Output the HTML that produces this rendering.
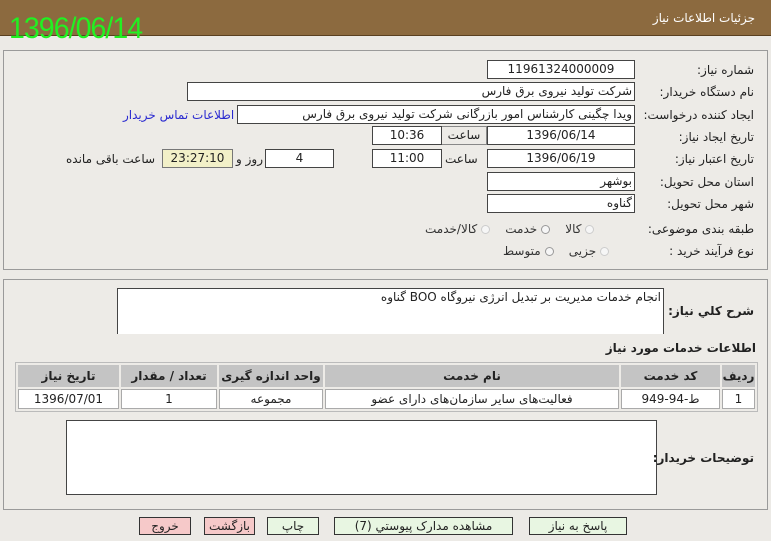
<!DOCTYPE html>
<html><head><meta charset="utf-8"><style>
*{margin:0;padding:0;box-sizing:border-box}
body{width:771px;height:541px;background:#ECEAE6;font-family:Tahoma,"DejaVu Sans","Liberation Sans",sans-serif;font-size:11px;color:#222;position:relative;overflow:hidden;direction:rtl}
.a{position:absolute}
.hdr{left:0;top:0;width:771px;height:36px;background:#8C6A3F;border-bottom:1px solid #5a4020}
.inp{position:absolute;background:#fff;border:1px solid #444;height:19px;line-height:17px;text-align:center;font-size:12px;white-space:nowrap;overflow:hidden}
.lbl{position:absolute;font-size:12px;white-space:nowrap}
.panel{position:absolute;border:1px solid #9a9a9a;background:#EDEBE7}
.rad{display:inline-block;width:9px;height:9px;border-radius:50%;border:1px solid #ccc;background:#f6f6f6;vertical-align:middle}
table{border-collapse:separate;border-spacing:2px;font-size:12px}
td{background:#fff;border:1px solid #aaa;text-align:center;height:20px}
th{background:#C4C4C4;font-weight:bold;height:22px}
.btn{position:absolute;top:517px;height:18px;border:1px solid #333;background:#E8F6E2;font-size:12px;text-align:center;line-height:16px}
</style></head><body>
<div class="a hdr"></div>
<div class="lbl" style="right:16px;top:11px;color:#fff;font-size:12px">جزئیات اطلاعات نیاز</div>
<div class="a" style="left:9px;top:12px;color:#22f022;font-size:30px;font-family:'Liberation Sans Narrow','Liberation Sans',sans-serif;direction:ltr;letter-spacing:-1px;transform:scaleX(0.95);transform-origin:left">1396/06/14</div>

<div class="panel" style="left:3px;top:50px;width:765px;height:220px"></div>
<div class="lbl" style="right:17px;top:63px">شماره نیاز:</div>
<div class="inp" style="left:487px;top:60px;width:148px">11961324000009</div>
<div class="lbl" style="right:17px;top:85px">نام دستگاه خریدار:</div>
<div class="inp" style="left:187px;top:82px;width:448px;text-align:right;padding-right:2px">شرکت تولید نیروی برق فارس</div>
<div class="lbl" style="right:17px;top:108px">ایجاد کننده درخواست:</div>
<div class="inp" style="left:237px;top:105px;width:398px;text-align:right;padding-right:2px">ویدا چگینی کارشناس امور بازرگانی شرکت تولید نیروی برق فارس</div>
<div class="lbl" style="left:123px;top:108px;color:#2a2ad0">اطلاعات تماس خریدار</div>
<div class="lbl" style="right:17px;top:130px">تاریخ ایجاد نیاز:</div>
<div class="inp" style="left:487px;top:126px;width:148px">1396/06/14</div>
<div class="inp" style="left:441px;top:126px;width:46px;background:#EDEBE7;border-color:#888">ساعت</div>
<div class="inp" style="left:372px;top:126px;width:70px">10:36</div>
<div class="lbl" style="right:17px;top:152px">تاریخ اعتبار نیاز:</div>
<div class="inp" style="left:487px;top:149px;width:148px">1396/06/19</div>
<div class="lbl" style="left:445px;top:152px">ساعت</div>
<div class="inp" style="left:372px;top:149px;width:70px">11:00</div>
<div class="inp" style="left:265px;top:149px;width:69px">4</div>
<div class="lbl" style="left:236px;top:152px">روز و</div>
<div class="inp" style="left:162px;top:149px;width:71px;background:#F2F0C8;border-color:#777">23:27:10</div>
<div class="lbl" style="left:66px;top:152px">ساعت باقی مانده</div>
<div class="lbl" style="right:17px;top:175px">استان محل تحویل:</div>
<div class="inp" style="left:487px;top:172px;width:148px;text-align:right;padding-right:2px">بوشهر</div>
<div class="lbl" style="right:17px;top:197px">شهر محل تحویل:</div>
<div class="inp" style="left:487px;top:194px;width:148px;text-align:right;padding-right:2px">گناوه</div>
<div class="lbl" style="right:17px;top:222px">طبقه بندی موضوعی:</div>
<div class="lbl" style="left:425px;top:222px;color:#333"><span class="rad"></span> کالا&nbsp;&nbsp;&nbsp; <span class="rad" style="border-color:#999"></span> خدمت&nbsp;&nbsp;&nbsp; <span class="rad"></span> کالا/خدمت</div>
<div class="lbl" style="right:17px;top:244px">نوع فرآیند خرید :</div>
<div class="lbl" style="left:503px;top:244px;color:#333"><span class="rad"></span> جزیی&nbsp;&nbsp;&nbsp; <span class="rad" style="border-color:#999"></span> متوسط</div>

<div class="panel" style="left:3px;top:279px;width:765px;height:231px"></div>
<div class="inp" style="left:117px;top:288px;width:547px;height:46px;text-align:right;padding-right:2px;border-bottom:none">انجام خدمات مدیریت بر تبدیل انرژی نیروگاه BOO گناوه</div>
<div class="lbl" style="right:17px;top:304px;font-weight:bold">شرح کلي نیاز:</div>
<div class="lbl" style="right:15px;top:341px;font-weight:bold">اطلاعات خدمات مورد نیاز</div>
<div class="a" style="left:15px;top:362px;width:743px;border:1px solid #bbb;background:#EDEBE7">
<table style="width:100%"><tr><th style="width:33px">ردیف</th><th style="width:99px">کد خدمت</th><th>نام خدمت</th><th style="width:104px">واحد اندازه گیری</th><th style="width:96px">تعداد / مقدار</th><th style="width:101px">تاریخ نیاز</th></tr>
<tr><td>1</td><td>ط-94-949</td><td>فعالیت‌های سایر سازمان‌های دارای عضو</td><td>مجموعه</td><td>1</td><td>1396/07/01</td></tr></table></div>
<div class="inp" style="left:66px;top:420px;width:591px;height:75px"></div>
<div class="lbl" style="right:17px;top:451px;font-weight:bold">توضیحات خریدار:</div>

<div class="btn" style="left:529px;width:98px">پاسخ به نیاز</div>
<div class="btn" style="left:334px;width:179px">مشاهده مدارک پیوستي (7)</div>
<div class="btn" style="left:267px;width:52px">چاپ</div>
<div class="btn" style="left:204px;width:51px;background:#F6C9C9">بازگشت</div>
<div class="btn" style="left:139px;width:52px;background:#F6C9C9">خروج</div>
</body></html>
